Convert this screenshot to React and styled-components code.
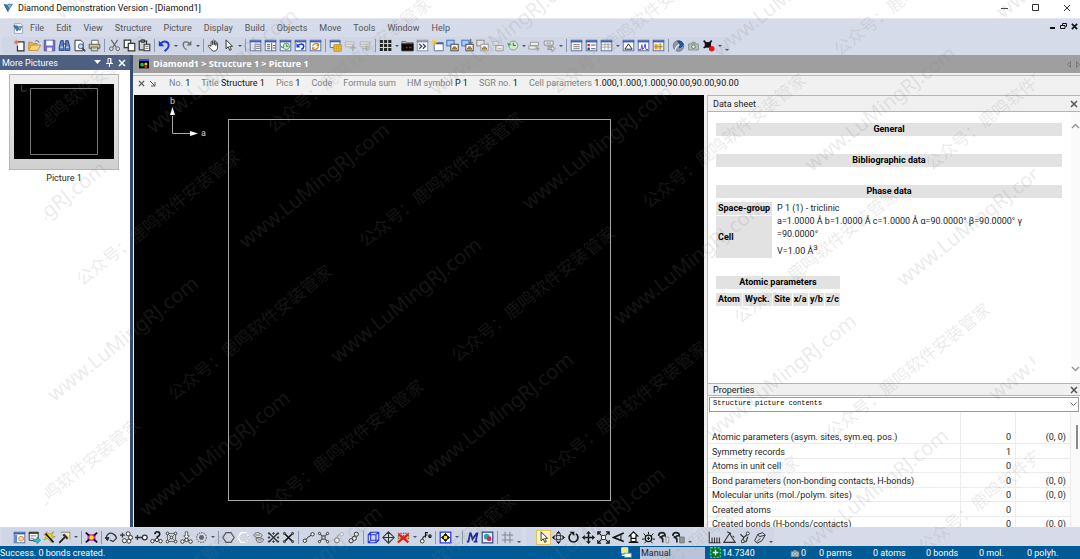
import React from "react";
import styled, { createGlobalStyle } from "styled-components";

const GlobalStyle = createGlobalStyle`
    * { box-sizing: border-box; }
    html, body, #root { height: 100%; }
    body {
        margin: 0;
        overflow: hidden;
        font-family: Roboto, "Noto Sans", "Noto Sans CJK SC", sans-serif;
        font-size: 9px;
        line-height: 12px;
        color: #1e1e1e;
        background: #fff;
    }
    button, select { font: inherit; color: inherit; }
`;

const Window = styled.div`
    position: relative;
    height: 100vh;
    display: flex;
    flex-direction: column;
    overflow: hidden;
    background: #f0f0f0;
`;

const PlainButton = styled.button`
    display: flex;
    align-items: center;
    justify-content: center;
    flex: none;
    padding: 0;
    border: 0;
    background: none;
    cursor: default;
`;

const TitleBar = styled.header`
    display: flex;
    align-items: center;
    height: 18px;
    padding: 0 5px 3px 3px;
    gap: 5px;
    background: #fff;
    color: #111;
`;

const TitleText = styled.h1`
    flex: 1;
    margin: 0;
    font-size: 9px;
    font-weight: 400;
`;

const TitleButtons = styled.div`
    display: flex;
    gap: 15px;
`;

const TitleButton = styled(PlainButton)`
    width: 16px;
    height: 14px;
`;

const MenuBar = styled.nav`
    display: flex;
    align-items: center;
    height: 19px;
    padding: 0 0 0 5px;
    background: #d6dbe9;
    border-top: 1px solid #e3e8f1;
    color: #555;
`;

const MenuItems = styled.div`
    display: flex;
    flex: 1;
    gap: 12px;
    padding-left: 6px;
`;

const MdiButtons = styled.div`
    display: flex;
    align-self: flex-start;
    padding-top: 1px;
`;

const MdiButton = styled(PlainButton)`
    width: 11px;
    height: 12px;
`;

const BarRow = styled.div`
    display: flex;
    flex: none;
    height: ${(p) => (p.$bottom ? "19px" : "18px")};
    padding: ${(p) => (p.$bottom ? "1px 0 0 2px" : "0 0 1px 2px")};
    background: #d6dbe9;
`;

const ToolStrip = styled.div`
    display: flex;
    align-items: center;
    padding-left: 2px;
    margin-right: ${(p) => (p.$gap ? "4px" : "0")};
    background: #cfd6e5;
`;

const Grip = styled.span`
    width: 4px;
    height: 12px;
    margin-right: 4px;
    background-image: radial-gradient(#9aa5bd 40%, transparent 45%);
    background-size: 2px 2px;
`;

const ToolButton = styled(PlainButton)`
    width: 15px;
    height: 15px;
    background: ${(p) => (p.$active ? "#fff3c4" : "none")};
    box-shadow: ${(p) => (p.$active ? "inset 0 0 0 1px #e5c365" : "none")};
`;

const CaretButton = styled(PlainButton)`
    width: 7px;
    height: 15px;
    align-items: ${(p) => (p.$low ? "flex-end" : "center")};
    padding-bottom: ${(p) => (p.$low ? "2px" : "0")};
`;

const Caret = styled.i`
    border: 2px solid transparent;
    border-top-color: #49536b;
    border-bottom: 0;
`;

const Separator = styled.span`
    width: 1px;
    height: 13px;
    margin: 0 2px;
    background: #8a97b3;
`;

const Body = styled.main`
    flex: 1;
    display: grid;
    grid-template-columns: 130px 1fr;
    grid-template-rows: minmax(0, 1fr);
    min-height: 0;
`;

const Side = styled.aside`
    background: #fff;
`;

const SideHeader = styled.div`
    display: flex;
    align-items: center;
    height: 15px;
    padding: 0 3px 0 2px;
    gap: 1px;
    background: #4d6082;
    color: #fff;
`;

const SideTitle = styled.h2`
    flex: 1;
    margin: 0;
    font-size: 9px;
    font-weight: 400;
`;

const SideButton = styled(PlainButton)`
    width: 11px;
    height: 13px;
`;

const Thumb = styled.figure`
    width: 110px;
    margin: 4px auto 0 9px;
    text-align: center;
`;

const ThumbFrame = styled.div`
    display: flex;
    height: 96px;
    padding: 9px 4px 10px;
    margin-bottom: 2px;
    border: 1px solid #b5b5b5;
    background: linear-gradient(#efefef, #d0d0d0);
    svg { width: 100%; height: 100%; background: #000; }
`;

const Work = styled.section`
    display: flex;
    flex-direction: column;
    min-width: 0;
    border-left: 3px solid #364b70;
`;

const DocHeader = styled.div`
    display: flex;
    align-items: center;
    flex: none;
    height: 18px;
    padding: 0 0 0 6px;
    gap: 4px;
    background: #9f9f9f;
    color: #fff;
`;

const Crumbs = styled.h2`
    flex: 1;
    margin: 0;
    font-family: "Open Sans", "Noto Sans", sans-serif;
    font-size: 9px;
    font-weight: 700;
`;

const NavButton = styled(PlainButton)`
    width: 4px;
    height: 12px;
    margin-left: 1px;
`;

const InfoBar = styled.div`
    display: flex;
    align-items: center;
    flex: none;
    height: 20px;
    margin-top: 2px;
    padding: 0 0 5px 3px;
    gap: 11px;
    background: #f1f1f1;
    border-top: 1px solid #b8b8b8;
    color: #808080;
    white-space: nowrap;
    b { font-weight: 400; color: #111; }
`;

const InfoButtons = styled.div`
    display: flex;
`;

const InfoButton = styled(PlainButton)`
    width: 11px;
    height: 12px;
`;

const Split = styled.div`
    flex: 1;
    display: grid;
    grid-template-columns: 1fr 373px;
    grid-template-rows: minmax(0, 1fr);
    gap: 3px;
    min-height: 0;
`;

const Viewport = styled.div`
    min-width: 0;
    min-height: 0;
    margin-left: 1px;
    background: #000;
    svg { display: block; width: 100%; height: 100%; }
`;

const Docks = styled.div`
    display: grid;
    grid-template-rows: minmax(0, 2fr) minmax(0, 1fr);
    min-height: 0;
`;

const Dock = styled.section`
    display: flex;
    flex-direction: column;
    min-height: 0;
    overflow: hidden;
    border-left: 1px solid #bdbdbd;
    background: #fff;
`;

const DockHeader = styled.div`
    display: flex;
    align-items: center;
    flex: none;
    height: ${(p) => (p.$small ? "13px" : "17px")};
    padding: 0 2px 0 5px;
    border: solid #b4b4b4;
    border-width: 1px 0;
    background: #f0f0f0;
`;

const DockTitle = styled.h2`
    flex: 1;
    margin: 0;
    font-size: 9px;
    font-weight: 400;
`;

const DockClose = styled(PlainButton)`
    width: 9px;
    height: 11px;
`;

const DockBody = styled.div`
    flex: 1;
    display: flex;
    min-height: 0;
`;

const Sheet = styled.div`
    flex: 1;
    padding: 11px 9px 0 8px;
    line-height: 13px;
`;

const SheetTable = styled.table`
    width: ${(p) => (p.$fit ? "124px" : "100%")};
    margin-bottom: ${(p) => (p.$fit ? "0" : "18px")};
    border-spacing: 0;
    th, td { padding: 0; }
    th { background: #e2e2e2; color: #000; }
`;

const KeyCell = styled.th`
    width: 56px;
    text-align: left;
    white-space: nowrap;
    border-top: ${(p) => (p.$first ? "4px" : "1px")} solid #fff;
    span { padding-left: 2px; }
`;

const ValueCell = styled.td`
    && { padding: ${(p) => (p.$first ? "4px" : "0")} 0 0 5px; }
    div { white-space: nowrap; }
    div:last-child { padding-top: 3px; }
    sup { font-size: 8px; line-height: 8px; }
`;

const AtomHead = styled.tr`
    th {
        border-top: 4px solid #fff;
        border-right: 1px solid #fff;
        white-space: nowrap;
    }
    th:last-child { border-right: 0; }
`;

const ScrollTrack = styled.div`
    display: flex;
    flex-direction: column;
    align-items: flex-end;
    justify-content: space-between;
    width: 9px;
    padding: 10px 0;
    background: #fafafa;
`;

const PropSelect = styled.select`
    flex: none;
    height: 15px;
    margin: 1px 1px 0 1px;
    padding: 0 12px 3px 3px;
    border: 1px solid #9a9a9a;
    border-radius: 0;
    appearance: none;
    background: #fff url("data:image/svg+xml,%3Csvg xmlns='http://www.w3.org/2000/svg' width='7' height='5'%3E%3Cpath d='M.5.5l3 3 3-3' fill='none' stroke='%23666'/%3E%3C/svg%3E") no-repeat right 1px center;
    font-family: "Liberation Mono", monospace;
    font-size: 7px;
    line-height: 10px;
    color: #000;
`;

const PropTable = styled.table`
    flex: 1;
    align-self: flex-start;
    border-spacing: 0;
    table-layout: fixed;
    td, th {
        height: 14px;
        padding: 1px 4px 0;
        border-bottom: 1px solid #ececec;
        border-right: 1px solid #ececec;
        font-weight: 400;
        line-height: 12px;
        text-align: left;
        white-space: nowrap;
    }
    tbody tr:nth-child(even) > * { height: 15px; }
    thead td { height: 18px; border-bottom: 0; }
    tbody td { text-align: right; }
`;

const PropScroll = styled.div`
    width: 9px;
    padding: 13px 0 0 5px;
    background: #fafafa;
    span { display: block; width: 2px; height: 24px; background: #8b8b8b; }
`;

const StatusBar = styled.footer`
    display: flex;
    align-items: center;
    flex: none;
    height: 13px;
    background: #005a96;
    color: #fff;
`;

const StatusText = styled.span`
    flex: 1;
`;

const ModeSelect = styled.select`
    width: 65px;
    height: 12px;
    margin: 0 5px 0 8px;
    padding: 0 1px;
    border: 0;
    border-radius: 0;
    appearance: none;
    background: #b9c3d9;
    color: #1e1e1e;
`;

const StatusCell = styled.span`
    display: flex;
    align-items: center;
    gap: 1px;
    width: ${(p) => p.$w}px;
`;

const Watermark = styled.div`
    position: absolute;
    inset: 0 45px;
    overflow: hidden;
    pointer-events: none;
`;

// rotated about the window's top-left corner, which lies 45px left of the clip
const MarkSheet = styled.div`
    position: absolute;
    top: 0;
    left: -45px;
    padding-top: 10px;
    transform: rotate(-38.7deg);
    transform-origin: 0 0;
    font-family: "Noto Sans", "Noto Sans CJK SC", sans-serif;
    color: rgba(128, 128, 128, 0.17);
`;

const MarkRow = styled.div`
    display: flex;
    height: ${(p) => (p.$site ? "73px" : "74px")};
    line-height: ${(p) => (p.$site ? "73px" : "78px")};
    font-size: ${(p) => (p.$site ? "20px" : "17px")};
    span { width: 245px; flex: none; white-space: nowrap; padding-left: ${(p) => (p.$site ? "10px" : "0")}; }
`;

/* ---------- icons, all on a 16 x 16 grid ---------- */

const Svg = ({ size = 13, children }) => (
    <svg width={size} height={size} viewBox="0 0 16 16" fill="none" stroke="#333" strokeWidth="1.2" aria-hidden="true">
        {children}
    </svg>
);

const Win = ({ children, gray }) => (
    <>
        <rect x="1.5" y="1.5" width="13" height="13" fill="#fff" stroke={gray ? "#8d93a3" : "#5d72a8"} />
        <path d="M1 3h14" stroke={gray ? "#8d93a3" : "#3f5fb5"} strokeWidth="2.4" />
        {children}
    </>
);

const Pics = ({ gray, plus }) => (
    <>
        <rect x="1" y="1.5" width="9" height="7" fill={gray ? "#e3e3e3" : "#a9ccf5"} stroke={gray ? "#888" : "#3f71c4"} />
        <rect x="6" y="6.5" width="9" height="8" fill="#fff" stroke={gray ? "#999" : "#445"} />
        <path d="M7.5 12.5l2-3h2l2 3z" fill={gray ? "#d8a038" : "#c48a1c"} stroke="#6b4a0d" strokeWidth=".8" />
        {plus && <path d="M12 0v6M9.5 3.5L12 6l2.500-2.500" stroke="#555" />}
    </>
);

const Dots = ({ pts, fill = "#fff", r = 2.1 }) => pts.map(([x, y]) => <circle key={x + "-" + y} cx={x} cy={y} r={r} fill={fill} />);

const ICONS = {
    new: (<><path d="M5.500 3.500H13.500v11h-8V8" fill="#fff" strokeWidth="1.500" /><path d="M4 1v6M1 4h6M2 2l4 4M6 2L2 6" stroke="#d9623a" strokeWidth=".9" /></>),
    open: (<><path d="M1 13.500V4h4l1 1.500h5V8" fill="#e9b94d" stroke="#c1912d" /><path d="M1 14l3-6.500h11.500L12 14z" fill="#ffd777" stroke="#c1912d" /><path d="M9 2.500c3-1 4 0 4.500 2" stroke="#3d64b8" /></>),
    save: (<><path d="M1.500 1.500h13v13h-13z" fill="#6f6fc4" stroke="#56569f" /><path d="M4 2h8v6H4z" fill="#fff" stroke="none" /><path d="M5 10.500h6V15H5z" fill="#e9e9f8" stroke="none" /></>),
    find: (<><path d="M3.500 2h3v4l1 8h-6V10zM9.500 2h3l2 8v4h-6l1-8z" fill="#5f7fc8" stroke="#29457f" /><path d="M6.500 6h3" /><path d="M3 10h3M10 10h3" stroke="#fff" /></>),
    preview: (<><path d="M2.500 1.500h7l3 3v10h-10z" fill="#fff" /><circle cx="9.500" cy="9" r="3" fill="#bcd8f2" stroke="#46607f" /><path d="M11.500 11.500l3.500 3.500" stroke="#444" strokeWidth="2" /></>),
    print: (<><path d="M4.500 6V1.500h8V6" fill="#fff" stroke="#666" /><path d="M1.500 6.500h13v5h-13z" fill="#c8c8a8" stroke="#60604f" /><path d="M4 10h8v4.500H4z" fill="#f7f7e6" stroke="#60604f" /><path d="M5 12h6" stroke="#999" /></>),
    cut: (<><path d="M4 1l6 9M12 1L6 10" stroke="#666" strokeWidth="1.400" /><circle cx="4" cy="12" r="2.300" stroke="#666" /><circle cx="12" cy="12" r="2.300" stroke="#666" /></>),
    copy: (<><path d="M1.500 1.500h8v9h-8z" fill="#fff" strokeWidth="1.500" /><path d="M6.500 5.500h8v9h-8z" fill="#fff" strokeWidth="1.500" /></>),
    paste: (<><path d="M1.500 2.500h9v11h-9z" fill="#ddd" strokeWidth="1.500" /><path d="M4 1h4v3H4z" fill="#777" /><path d="M7.500 6.500h7v8h-7z" fill="#fff" strokeWidth="1.300" /><path d="M9 9h4M9 11.500h4" strokeWidth=".8" /></>),
    undo: (<><path d="M3 6c4-5 11-3 10 3-.4 3-3 4.500-5 6" stroke="#1c36e0" strokeWidth="2.300" /><path d="M1 2v7h7z" fill="#1c36e0" stroke="none" /></>),
    redo: (<><path d="M12 6C9 2 3 3 4 8c.4 3 2 4 4 5" stroke="#707070" strokeWidth="1.600" /><path d="M14 2v6H8z" fill="#707070" stroke="none" /></>),
    hand: <path d="M5 9V3.500q1-1.500 2 0V7 2q1-1.500 2 0v5-4q1-1.500 2 0v5-3q1-1.200 2 0v6q-1 4-4 4H7.500Q5 13 1.500 9q0-2 2-1z" fill="#fff" strokeWidth="1.100" />,
    pointer: <path d="M5 1v11l2.700-2.500L9.500 14l2-1-2-4H13z" fill="#fff" strokeWidth="1.200" />,
    winTable: <Win><path d="M3 6h4v7H3z" fill="#dfe4ee" stroke="none" /><path d="M8.500 6.500h5M8.500 9h5M8.500 11.500h5M7.500 5v9" stroke="#777" /></Win>,
    winList: <Win><path d="M3.500 7h4M3.500 9.500h4M3.500 12h4M9.500 5v9M11 8h3M11 11h3" stroke="#555" /></Win>,
    winClock: <Win><circle cx="9" cy="9" r="4" fill="#d4efd2" stroke="#56a157" /><path d="M9 6.500V9h2.500M2 8l2 3 2-2" stroke="#357d38" /></Win>,
    winUndo: <Win><path d="M5 8c3-3 7-2 7 1 0 2-1 3-3 4" stroke="#1c36e0" strokeWidth="2" /><path d="M3 5v5.500h5z" fill="#1c36e0" stroke="none" /></Win>,
    winSync: <Win><path d="M4.500 9a4 4 0 017-2M11.500 9a4 4 0 01-7 2.500" stroke="#dc8a1d" strokeWidth="1.700" /><path d="M12.500 4.500v4h-4zM3.500 14v-4h4z" fill="#dc8a1d" stroke="none" /></Win>,
    winGrid: (<><path d="M1.500 1.500h12v9h-12z" fill="#e7effb" stroke="#5d72a8" /><path d="M1 3h13" stroke="#3f5fb5" strokeWidth="2" /><path d="M6 7h9v8H6z" fill="#ffd24a" stroke="#bd8f15" /><path d="M9 7v8M12 7v8M6 9.500h9M6 12h9" stroke="#bd8f15" strokeWidth=".8" /></>),
    grayPlus: (<><path d="M1.500 3.500h11v6h-11zM2 6.500h10" fill="#e4e4e4" stroke="#b5b5b5" /><path d="M11 7v8M7 11h8" stroke="#a8a8a8" strokeWidth="1.600" /></>),
    grayArrow: (<><path d="M1.500 3.500h12v6h-12zM2 6.500h11" fill="#e4e4e4" stroke="#b5b5b5" /><path d="M4 12h7M9 8.500v6l4-3z" fill="#ccc" stroke="#aaa" /></>),
    dotGrid: [3, 8, 13].map((y) => <path key={y} d={`M1 ${y}h3.800M6.200 ${y}h3.800M11.400 ${y}h3.800`} stroke="#222" strokeWidth="3.800" />),
    blackFolder: (<><path d="M1 3h5l1 1.500h8V7H1z" fill="#b9b9b9" stroke="#777" /><path d="M1 6h14v8.500H1z" fill="#0a0a0a" stroke="#222" /><path d="M6 10.500h2M10 10.500h3" stroke="#e01010" strokeWidth="2" /></>),
    forward: <Win gray><path d="M4 6l3 3-3 3M8.500 6l3 3-3 3" stroke="#2a3f87" strokeWidth="1.600" /></Win>,
    winNew: (<><path d="M4 4.500h11v10H4z" fill="#fff" stroke="#5d72a8" /><path d="M4 5.500h11" stroke="#3f5fb5" strokeWidth="2" /><path d="M4 0v8M0 4h8M1.500 1.500l5 5M6.500 1.500l-5 5" stroke="#f0cd35" /></>),
    pics: <Pics />,
    picsPlus: <Pics plus />,
    picsGray: <Pics gray />,
    picsFade: (<><path d="M2 3h7v5H2z" fill="#dedede" stroke="#bbb" /><path d="M6 8h9v6.500H6z" fill="#eee" stroke="#999" /><path d="M8 12h5" stroke="#aaa" /></>),
    clock: (<><circle cx="9" cy="8" r="5.500" fill="#d3e8d2" stroke="#7ea57e" /><path d="M9 4.500V8h3" stroke="#555" /><path d="M1 5l2.500 4L7 6z" fill="#56a157" stroke="none" /></>),
    links: (<><path d="M3 4h10v4H3zM1 8.500h9v4H1z" fill="#eee" stroke="#999" /><path d="M12 9v6M9.500 12h5" stroke="#999" /></>),
    linkOut: (<><path d="M1.500 2.500h11v5h-11zM4 5h6M5 9h5" fill="#eee" stroke="#8f8f8f" /><path d="M6 11h5V8l4 4-4 3.500V13H6z" fill="#ddd" stroke="#8f8f8f" /></>),
    text: <Win><path d="M4 7h8M4 9.500h8M4 12h8" stroke="#777" /></Win>,
    legend: <Win><path d="M3 6h3v3H3z" fill="#e32222" stroke="none" /><path d="M3 10.500h3v3H3z" fill="#2734e0" stroke="none" /><path d="M7.500 7.500H13M7.500 12H13" stroke="#555" /></Win>,
    table: <Win><path d="M2 7h12M2 10h12M6 5v9M10 5v9" stroke="#aaa" /></Win>,
    angle: <Win><path d="M3.500 12.500L8 6l4.500 6.500z" stroke="#222" /></Win>,
    peaks: <Win><path d="M2.500 13H5l1-6 1 6 2-3 1-4 1 7h2.500" stroke="#5a4ad6" /></Win>,
    sheet: <Win><path d="M3 6h4v7H3z" fill="#f5a52b" stroke="none" /><path d="M7 6h6v7H7z" fill="#f4e36e" stroke="none" /><path d="M3 9.500h10M10 5v9" stroke="#886" /></Win>,
    globe: (<><circle cx="8" cy="8.500" r="6.500" fill="#8e9aab" stroke="#6f7b8c" /><path d="M7 2.500q7 0 6.500 5.500l-4 3q-1-3 1-4z" fill="#1b63b4" stroke="#1b3f75" /><path d="M4 14q0-4 5-7" stroke="#e6edf5" strokeWidth="1.500" /></>),
    camera: (<><path d="M2 6h12v7.500H2zM6 6V4h4v2" fill="#b7c0bd" stroke="#8a9692" /><circle cx="8" cy="9.500" r="2.200" fill="#dfe" stroke="#61716c" /></>),
    movie: (<><path d="M2 2l3 3M12 2L9 5M2 11l3-2" stroke="#111" strokeWidth="2" /><path d="M4 4.500h6.500V10H4z" fill="#111" stroke="#111" /><circle cx="12" cy="12" r="3.400" fill="#ee1414" stroke="none" /></>),
    // bottom bars
    build: <Win><path d="M2 5h3v9H2z" fill="#5a86dc" stroke="none" /><circle cx="10" cy="9.500" r="3" fill="#f6dfa8" stroke="#cf8f28" /></Win>,
    winGo: (<><path d="M1.500 1.500h11v10h-11z" fill="#fff" /><path d="M1 2.500h12" strokeWidth="2" /><path d="M3 6h7M3 9h4" stroke="#777" /><path d="M7 10h4V7.500l4.500 4-4.500 4V13H7z" fill="#2bc3cf" stroke="#14727b" strokeWidth=".8" /></>),
    wand: (<><path d="M1 4l3 3-3 4 5-2 4 5V9l5-2-5-1 3-5-5 3-4-3 1 4z" fill="#f1e02a" stroke="#8b8116" strokeWidth=".7" /><path d="M3 3l10 11" stroke="#111" strokeWidth="2" /></>),
    brush: (<><path d="M3.500 1.500h11v9" stroke="#777" /><path d="M5 2l9 0v9z" fill="#f8ee9d" stroke="none" /><path d="M1.500 14.500L9 7" stroke="#222" strokeWidth="2.200" /><path d="M8 4l4 4-1 2-5-5z" fill="#333" /></>),
    explode: (<><path d="M3 4h10v8H3z" fill="#f21cd2" stroke="none" /><path d="M1 2l4 3.500M15 2l-4 3.500M1 14l4-3.500M15 14l-4-3.500" stroke="#111" strokeWidth="2.200" /><circle cx="8" cy="8" r="2.600" fill="#ffe81a" stroke="none" /></>),
    rotate: (<><path d="M2 10a5.500 5.500 0 018-6.500q4 2 4 5.500l-4 4-4-2" strokeWidth="1.500" /><path d="M0 8h5l-2 4z" fill="#333" /></>),
    atoms: (<><path d="M0 5h6M3 2v6" strokeWidth="1.600" /><Dots pts={[[10, 3.500], [13, 8], [5.500, 12], [11, 12.500]]} r={2.500} /></>),
    addAtom: (<><path d="M0 8h6M3 5v6M6 8h3" strokeWidth="1.600" /><circle cx="12" cy="8" r="3" fill="#fff" strokeWidth="1.500" /></>),
    ask: (<><path d="M6 4q0-3 3-3t3 3q0 2-3 3v2" stroke="#111" strokeWidth="1.900" /><path d="M3.500 12L8 10l4.500 2" /><Dots pts={[[3, 12.500], [8.500, 11], [13, 12.500]]} /></>),
    mesh: (<><path d="M3 3h10v10H3zM3 3l10 10M13 3L3 13" stroke="#666" /><Dots pts={[[3, 3], [13, 3], [3, 13], [13, 13], [8, 8]]} r={1.600} /></>),
    tree: (<><path d="M8 3v6L3 13M8 9l5 4" /><path d="M6.500 1h3v5h2L8 9.500 4.500 6h2z" fill="#fff" strokeWidth=".9" /><Dots pts={[[3, 13], [13, 13], [8, 11]]} /></>),
    sphere: (<><circle cx="8" cy="8" r="6" strokeDasharray="2 1" stroke="#777" strokeWidth="1.300" /><circle cx="8" cy="8" r="3" fill="#666" stroke="none" /></>),
    hexagon: <path d="M5 2h6l4 6-4 6H5L1 8z" stroke="#555" strokeWidth="1.400" />,
    ring: (<><path d="M5 2h6l4 6-4 6H5L1 8z" stroke="#fff" strokeWidth="1.600" /><path d="M11 3l4 5-4 6" stroke="#999" strokeDasharray="2 2" /></>),
    stack: (<><path d="M2 5q3-5 8-2t0 5Q4 9 2 5zM5 9q5-2 9 1 0 4-5 4-4 0-4-5z" fill="#ddd" stroke="#666" /><path d="M4 5h6M7 11h5" stroke="#777" /></>),
    crossAtoms: (<><path d="M3 3l10 10M13 3L3 13" strokeWidth="1.800" /><Dots pts={[[2.500, 3], [8, 3], [13.500, 3], [2.500, 8], [13.500, 8], [2.500, 13], [8, 13], [13.500, 13]]} r={.9} fill="#333" /></>),
    bigX: (<><path d="M4 4l8 8M12 4l-8 8" stroke="#111" strokeWidth="2" /><Dots pts={[[3, 3], [13, 3], [3, 13], [13, 13]]} r={1.300} fill="#777" /></>),
    bond: (<><path d="M4 12q2-5 8-7" /><Dots pts={[[3.500, 12], [13, 4]]} r={2.100} /></>),
    net: (<><path d="M3 3l3 3M13 3l-3 3M3 13l3-3M13 13l-3-3M6 6h4v4H6z" stroke="#555" strokeWidth="1.400" /><Dots pts={[[3, 3], [13, 3], [3, 13], [13, 13]]} r={1.400} /></>),
    pair: (<><path d="M11 4q-5 1-5 5" stroke="#999" /><circle cx="6" cy="11.500" r="3" fill="#eee" stroke="#777" /><circle cx="12" cy="4" r="2.200" fill="#eee" stroke="#aaa" /></>),
    chain: (<><path d="M5 11l6-6" /><Dots pts={[[5, 12], [11.500, 4], [9, 9]]} r={2.600} fill="#e4e7ee" /></>),
    cell: <path d="M1.500 4.500h9.500v10H1.500zM4.500 1.500h10v10h-10zM1.500 4.500l3-3M11 4.500l3.500-3M1.500 14.500l3-3M11 14.500l3.500-3" stroke="#2438e6" strokeWidth="1.300" />,
    poly: <path d="M8 1l7 7-7 7-7-7zM1 8h14M8 1v14" strokeWidth="1.300" />,
    deleteAll: (<><path d="M1 3h14M1 6h14M1 9h14" stroke="#8a6a2a" strokeWidth="2" strokeDasharray="2 1" /><path d="M1 14L14 4M2 4l12 10" stroke="#f01414" strokeWidth="2.600" /></>),
    element: (<><path d="M4 12q0-5 4-6" strokeWidth="1.400" /><circle cx="4" cy="12.500" r="2.300" fill="#fff" /><path d="M8 8V2h3M8 5h2.500M12 6.500h3q0-2-1.500-2T12 6.500t3 1.500" stroke="#111" strokeWidth="1.300" /></>),
    fill: (<><path d="M1.500 1.500h13v13h-13z" fill="#fff" stroke="#2438e6" strokeWidth="1.600" /><circle cx="8" cy="8" r="3" fill="#ffe81a" stroke="none" /><path d="M8 3l2 2.500H6zM8 13l2-2.500H6zM3 8l2.500-2v4zM13 8l-2.500-2v4z" fill="#111" stroke="#111" /></>),
    measureM: <path d="M1 13h3M3 13L5 3h1l2 7 5-7h1l-2 10M9.500 13H14" stroke="#1b2c9c" strokeWidth="2.200" />,
    render: (<><path d="M1.500 1.500h13v13h-13z" fill="#e8f5fa" stroke="#35489d" strokeWidth="1.500" /><circle cx="7" cy="7" r="3.500" fill="#2ea6ac" stroke="none" /><circle cx="10" cy="9.500" r="3" fill="#d22c4b" stroke="none" /></>),
    hash: <path d="M5 1v14M11 1v14M1 5h14M1 11h14" stroke="#808898" strokeWidth="1.300" />,
    orbit: (<><ellipse cx="8" cy="8" rx="6.500" ry="2.500" /><ellipse cx="8" cy="8" rx="2.500" ry="6.500" /><path d="M8 0l2.500 3h-5zM8 16l2.500-3h-5zM0 8l3-2.500v5zM16 8l-3-2.500v5z" fill="#111" stroke="none" /></>),
    spin: (<><path d="M5 3.500a5.500 5.500 0 106 0" stroke="#111" strokeWidth="2" /><path d="M3 1h6v5z" fill="#111" stroke="none" /></>),
    move: (<><path d="M8 3v10M3 8h10" stroke="#111" strokeWidth="1.800" /><path d="M8 0l3 3.500H5zM8 16l3-3.500H5zM0 8l3.500-3v6zM16 8l-3.500-3v6z" fill="#111" stroke="none" /></>),
    zoom: (<><path d="M5.500 5.500h5v5h-5z" fill="#fff" /><path d="M1 1l4 4M15 1l-4 4M1 15l4-4M15 15l-4-4M1 5V1h4M11 1h4v4M1 11v4h4M15 11v4h-4" stroke="#111" strokeWidth="1.400" /></>),
    perspective: (<><path d="M14.500 2.500L2 8l12.500 5" stroke="#111" strokeWidth="1.900" /><path d="M11 5v6" stroke="#111" /></>),
    upArrow: (<><path d="M8 1l5 5h-2v7H5V6H3z" fill="#fff" stroke="#111" strokeWidth="1.500" /><path d="M2 14h12M5 9h6" stroke="#111" strokeWidth="1.500" /></>),
    sun: (<><circle cx="8" cy="9" r="4" stroke="#111" strokeWidth="1.600" /><path d="M8 1v3M2 3l2.500 3M14 3l-2.500 3M0 10h3M13 10h3M3 15l2-2M13 15l-2-2M6 9h4M8 7v4" stroke="#111" /></>),
    walk: (<><path d="M2 6q0-4 4-4t4 4q-2-1-4 1v3M4 6v3M7 9v5" stroke="#222" strokeWidth="2" /><path d="M11 7.500h3.500v7H11z" fill="#ddd" stroke="#999" /></>),
    walkGray: (<><path d="M1 6q0-4 4-4t4 4q-2-1-4 1v3M3 6v3M6 9v5" stroke="#222" strokeWidth="2" /><path d="M9.500 7.500h5.500v7H9.500z" fill="#999" stroke="#777" /></>),
    ruler: <path d="M1.500 1v13.500h14M5 8v6M8 8v6M11 8v6M14 8v6" strokeWidth="1.300" />,
    triangle: <path d="M1 14h14L8 3zM5 1l5 2M12 6l2 2" strokeWidth="1.300" />,
    torsion: (<><path d="M3 4l4 4 6-5M7 8l-2 6 5-1 2-6" strokeWidth="1.500" /><Dots pts={[[6, 12.500], [12, 3]]} r={1.800} /></>),
    plane: <path d="M2 12l4-8 6-2 3 3-4 7-6 3zM6 4l2 3 7-2M5 13l4-4" strokeWidth="1.200" />,
};

function Tools({ items, active }) {
    return items.split(" ").map((id, i) => {
        if (id === "|") return <Separator key={i} />;
        if (id === "v" || id === "_") {
            return (
                <CaretButton key={i} $low={id === "_"} aria-label="More">
                    <Caret />
                </CaretButton>
            );
        }
        return (
            <ToolButton key={i} $active={id === active} aria-label={id}>
                <Svg>{ICONS[id]}</Svg>
            </ToolButton>
        );
    });
}

const MENUS = ["File", "Edit", "View", "Structure", "Picture", "Display", "Build", "Objects", "Move", "Tools", "Window", "Help"];

const INFO = [
    ["No.", "1"],
    ["Title", "Structure 1"],
    ["Pics", "1"],
    ["Code", ""],
    ["Formula sum", ""],
    ["HM symbol", "P 1"],
    ["SGR no.", "1"],
    ["Cell parameters", "1.000,1.000,1.000,90.00,90.00,90.00"],
];

const PROPS = [
    ["Atomic parameters (asym. sites, sym.eq. pos.)", "0", "(0, 0)"],
    ["Symmetry records", "1", ""],
    ["Atoms in unit cell", "0", ""],
    ["Bond parameters (non-bonding contacts, H-bonds)", "0", "(0, 0)"],
    ["Molecular units (mol./polym. sites)", "0", "(0, 0)"],
    ["Created atoms", "0", ""],
    ["Created bonds (H-bonds/contacts)", "0", "(0, 0)"],
];

const CloseX = ({ color = "#333", width = 1.5, size = 8 }) => (
    <svg width={size} height={size} viewBox="0 0 8 8" stroke={color} strokeWidth={width} aria-hidden="true">
        <path d="M1 1l6 6M7 1L1 7" />
    </svg>
);

function Title() {
    return (
        <TitleBar>
            <Svg size={10}>
                <path d="M1 2l7 12 3-5-5-7z" fill="#3c7fb5" stroke="none" />
                <path d="M8 2h7l-5 7-3-4z" fill="#7cc4dc" stroke="#2d5f8d" />
                <path d="M2 2l6 12" stroke="#1d4468" />
            </Svg>
            <TitleText>Diamond Demonstration Version - [Diamond1]</TitleText>
            <TitleButtons>
                <TitleButton aria-label="Minimize"><svg width="8" height="8"><path d="M0 4.500h7" stroke="#444" /></svg></TitleButton>
                <TitleButton aria-label="Maximize"><svg width="8" height="8"><path d="M.5.5h6v6h-6z" fill="none" stroke="#333" /></svg></TitleButton>
                <TitleButton aria-label="Close"><CloseX width={1} /></TitleButton>
            </TitleButtons>
        </TitleBar>
    );
}

function Menu() {
    return (
        <MenuBar>
            <Grip />
            <Svg size={11}>
                <path d="M2 1h9l3 3v11H2z" fill="#fff" stroke="#8a9bb5" />
                <path d="M1 4l5 8 2-3-2-5z" fill="#2f86b0" stroke="#1d4468" strokeWidth=".8" />
                <path d="M8 5h5l-3 6-2-3z" fill="#6fb7d3" stroke="#1d4468" strokeWidth=".8" />
            </Svg>
            <MenuItems>
                {MENUS.map((m) => <PlainButton key={m}>{m}</PlainButton>)}
            </MenuItems>
            <MdiButtons>
                <MdiButton aria-label="Minimize document"><svg width="7" height="8"><path d="M1 6h5" stroke="#111" strokeWidth="2" /></svg></MdiButton>
                <MdiButton aria-label="Restore document"><svg width="8" height="8" fill="none" stroke="#111"><path d="M2.500 3V1.500h4v3H5.500M.5 3.500h4.500v3H.5z" /></svg></MdiButton>
                <MdiButton aria-label="Close document"><CloseX color="#111" width={2} size={7} /></MdiButton>
            </MdiButtons>
        </MenuBar>
    );
}

function MorePictures() {
    return (
        <Side>
            <SideHeader>
                <SideTitle>More Pictures</SideTitle>
                <SideButton aria-label="Panel menu"><svg width="7" height="5"><path d="M0 0h7L3.500 4z" fill="#fff" /></svg></SideButton>
                <SideButton aria-label="Pin"><svg width="7" height="9" stroke="#fff" fill="none"><path d="M2 5V.5h3V5M4.500 1v4M0 5.500h7M3.500 6v3" /></svg></SideButton>
                <SideButton aria-label="Close panel"><CloseX color="#fff" width={1.6} /></SideButton>
            </SideHeader>
            <Thumb>
                <ThumbFrame>
                    <svg viewBox="0 0 100 75" fill="none" stroke="#777">
                        <path d="M16.500 4.500h67v66h-67z" />
                        <path d="M7.500 1v6h5" stroke="#444" />
                    </svg>
                </ThumbFrame>
                <figcaption>Picture 1</figcaption>
            </Thumb>
        </Side>
    );
}

const AxisLabel = styled.text`
    font-size: 9px;
    fill: #d0d0d0;
    stroke: none;
`;

function Picture() {
    return (
        <Viewport>
            <svg viewBox="0 0 570 432" fill="none" stroke="#a8a8a8">
                <rect x="94.500" y="24.500" width="382" height="381" />
                <path d="M38.500 21v17.500H58" />
                <path d="M38.500 12l2.500 8h-5zM64 38.500l-8-2.500v5z" fill="#fff" stroke="none" />
                <AxisLabel x="36" y="9">b</AxisLabel>
                <AxisLabel x="67" y="41">a</AxisLabel>
            </svg>
        </Viewport>
    );
}

function DataSheet() {
    return (
        <Dock>
            <DockHeader>
                <DockTitle>Data sheet</DockTitle>
                <DockClose aria-label="Close data sheet"><CloseX color="#555" /></DockClose>
            </DockHeader>
            <DockBody>
                <Sheet>
                    <SheetTable><thead><tr><th>General</th></tr></thead></SheetTable>
                    <SheetTable><thead><tr><th>Bibliographic data</th></tr></thead></SheetTable>
                    <SheetTable>
                        <thead><tr><th colSpan={2}>Phase data</th></tr></thead>
                        <tbody>
                            <tr>
                                <KeyCell scope="row" $first><span>Space-group</span></KeyCell>
                                <ValueCell $first>P 1 (1) - triclinic</ValueCell>
                            </tr>
                            <tr>
                                <KeyCell scope="row"><span>Cell</span></KeyCell>
                                <ValueCell>
                                    <div>a=1.0000 Å b=1.0000 Å c=1.0000 Å α=90.0000° β=90.0000° γ</div>
                                    <div>=90.0000°</div>
                                    <div>V=1.00 Å<sup>3</sup></div>
                                </ValueCell>
                            </tr>
                        </tbody>
                    </SheetTable>
                    <SheetTable $fit>
                        <thead>
                            <tr><th colSpan={6}>Atomic parameters</th></tr>
                            <AtomHead>
                                {["Atom", "Wyck.", "Site", "x/a", "y/b", "z/c"].map((h) => <th key={h}>{h}</th>)}
                            </AtomHead>
                        </thead>
                    </SheetTable>
                </Sheet>
                <ScrollTrack>
                    <svg width="9" height="9" fill="none" stroke="#999" strokeWidth="1.500"><path d="M1 6l3.500-3.500L8 6" /></svg>
                    <svg width="9" height="9" fill="none" stroke="#999" strokeWidth="1.500"><path d="M1 3l3.500 3.500L8 3" /></svg>
                </ScrollTrack>
            </DockBody>
        </Dock>
    );
}

function Properties() {
    return (
        <Dock>
            <DockHeader $small>
                <DockTitle>Properties</DockTitle>
                <DockClose aria-label="Close properties"><CloseX color="#555" /></DockClose>
            </DockHeader>
            <PropSelect aria-label="Properties category">
                <option>Structure picture contents</option>
            </PropSelect>
            <DockBody>
                <PropTable>
                    <colgroup><col /><col width="55" /><col width="55" /></colgroup>
                    <thead><tr><td /><td /><td /></tr></thead>
                    <tbody>
                        {PROPS.map(([name, count, extra]) => (
                            <tr key={name}>
                                <th scope="row">{name}</th>
                                <td>{count}</td>
                                <td>{extra}</td>
                            </tr>
                        ))}
                    </tbody>
                </PropTable>
                <PropScroll><span /></PropScroll>
            </DockBody>
        </Dock>
    );
}

function Status() {
    return (
        <StatusBar>
            <StatusText>Success. 0 bonds created.</StatusText>
            <Svg size={11}>
                <path d="M1 1h9v8H1z" fill="#f4e983" stroke="#eee" />
                <path d="M5 9h10v6H5z" fill="#fff" stroke="#3a7" />
                <path d="M1 12h6" stroke="#fff" strokeWidth="2" />
            </Svg>
            <ModeSelect aria-label="Mode"><option>Manual</option></ModeSelect>
            <StatusCell $w={80}>
                <Svg size={11}>
                    <path d="M1 1h14v14H1z" fill="#0c6c2e" stroke="#34d95f" strokeDasharray="3 2" strokeWidth="2" />
                    <path d="M8 4v8M4 8h8" stroke="#d8ffe0" strokeWidth="2" />
                </Svg>
                14.7340
            </StatusCell>
            <StatusCell $w={29}><Svg size={10}>{ICONS.camera}</Svg>0</StatusCell>
            <StatusCell $w={54}>0 parms</StatusCell>
            <StatusCell $w={53}>0 atoms</StatusCell>
            <StatusCell $w={53}>0 bonds</StatusCell>
            <StatusCell $w={48}>0 mol.</StatusCell>
            <StatusCell $w={53}>0 polyh.</StatusCell>
        </StatusBar>
    );
}

const STEP = 245;
const MARK_LEN = 206;
const SIN = Math.sin((38.7 * Math.PI) / 180);
const COS = Math.cos((38.7 * Math.PI) / 180);

// start offsets of the marks in one row that reach into the window
function visibleMarks(row, width, height) {
    const along = row % 2 === 0 ? -464 : -360;
    const across = 48 + row * 73.5;
    const starts = [];
    for (let u = along; u < width; u += STEP) {
        const x = u * COS + across * SIN;
        const y = across * COS - u * SIN;
        const seenX = x < width - 65 && x + MARK_LEN * COS > 65;
        const seenY = y > 20 && y - MARK_LEN * SIN < height - 20;
        if (seenX && seenY) starts.push(u);
    }
    return starts;
}

function Marks() {
    const rows = Array.from({ length: 16 }, (_, r) => visibleMarks(r, window.innerWidth, window.innerHeight));
    return (
        <Watermark aria-hidden="true">
            <MarkSheet>
                {rows.map((starts, r) => (
                    <MarkRow key={r} $site={r % 2 === 0} style={{ marginLeft: starts[0] }}>
                        {starts.map((u) => (
                            <span key={u}>{r % 2 === 0 ? "www.LuMingRJ.com" : "公众号：鹿鸣软件安装管家"}</span>
                        ))}
                    </MarkRow>
                ))}
            </MarkSheet>
        </Watermark>
    );
}

const App = () => {
    return (
        <>
            <GlobalStyle />
            <Window>
                <Title />
                <Menu />
                <BarRow>
                    <ToolStrip>
                        <Grip />
                        <Tools items="new open save find preview print | cut copy paste | undo v redo v | hand pointer v | winTable winList winClock winUndo winSync | winGrid grayPlus grayArrow | dotGrid v blackFolder forward winNew pics picsPlus picsGray picsFade clock v links linkOut v | text legend table v angle peaks sheet | globe camera movie v _" />
                    </ToolStrip>
                </BarRow>
                <Body>
                    <MorePictures />
                    <Work>
                        <DocHeader>
                            <Svg size={10}>
                                <path d="M0 1h16v14H0z" fill="#000" stroke="none" />
                                <path d="M0 2h16" stroke="#3452c8" strokeWidth="3" />
                                <circle cx="5" cy="9" r="3" fill="#17c43a" stroke="none" />
                                <circle cx="11" cy="8" r="2.500" fill="#e8c81c" stroke="none" />
                                <circle cx="11" cy="12" r="2.500" fill="#e02626" stroke="none" />
                            </Svg>
                            <Crumbs>Diamond1 &gt; Structure 1 &gt; Picture 1</Crumbs>
                            <NavButton aria-label="Previous"><svg width="4" height="7"><path d="M3.500.5v6L.5 3.500z" fill="none" stroke="#777" /></svg></NavButton>
                            <NavButton aria-label="Next"><svg width="4" height="7"><path d="M.5.5v6l3-3z" fill="none" stroke="#777" /></svg></NavButton>
                        </DocHeader>
                        <InfoBar>
                            <InfoButtons>
                                <InfoButton aria-label="Close info"><CloseX color="#555" size={7} /></InfoButton>
                                <InfoButton aria-label="Collapse info"><svg width="7" height="7" fill="none" stroke="#555"><path d="M1 1l4.500 4.500M6 2v4H2" /></svg></InfoButton>
                            </InfoButtons>
                            {INFO.map(([k, v]) => (
                                <span key={k}>{k} <b>{v}</b></span>
                            ))}
                        </InfoBar>
                        <Split>
                            <Picture />
                            <Docks>
                                <DataSheet />
                                <Properties />
                            </Docks>
                        </Split>
                    </Work>
                </Body>
                <BarRow $bottom>
                    <ToolStrip $gap>
                        <Grip />
                        <Tools items="build winGo wand brush v | explode | rotate atoms addAtom ask mesh tree sphere v | hexagon ring stack crossAtoms bigX | bond net pair chain | cell poly deleteAll v element | fill v | measureM render | hash _" />
                    </ToolStrip>
                    <ToolStrip $gap>
                        <Grip />
                        <Tools active="pointer" items="pointer orbit spin move zoom perspective upArrow sun walk walkGray _" />
                    </ToolStrip>
                    <ToolStrip>
                        <Grip />
                        <Tools items="ruler triangle torsion plane _" />
                    </ToolStrip>
                </BarRow>
                <Status />
                <Marks />
            </Window>
        </>
    );
};

export default App;
